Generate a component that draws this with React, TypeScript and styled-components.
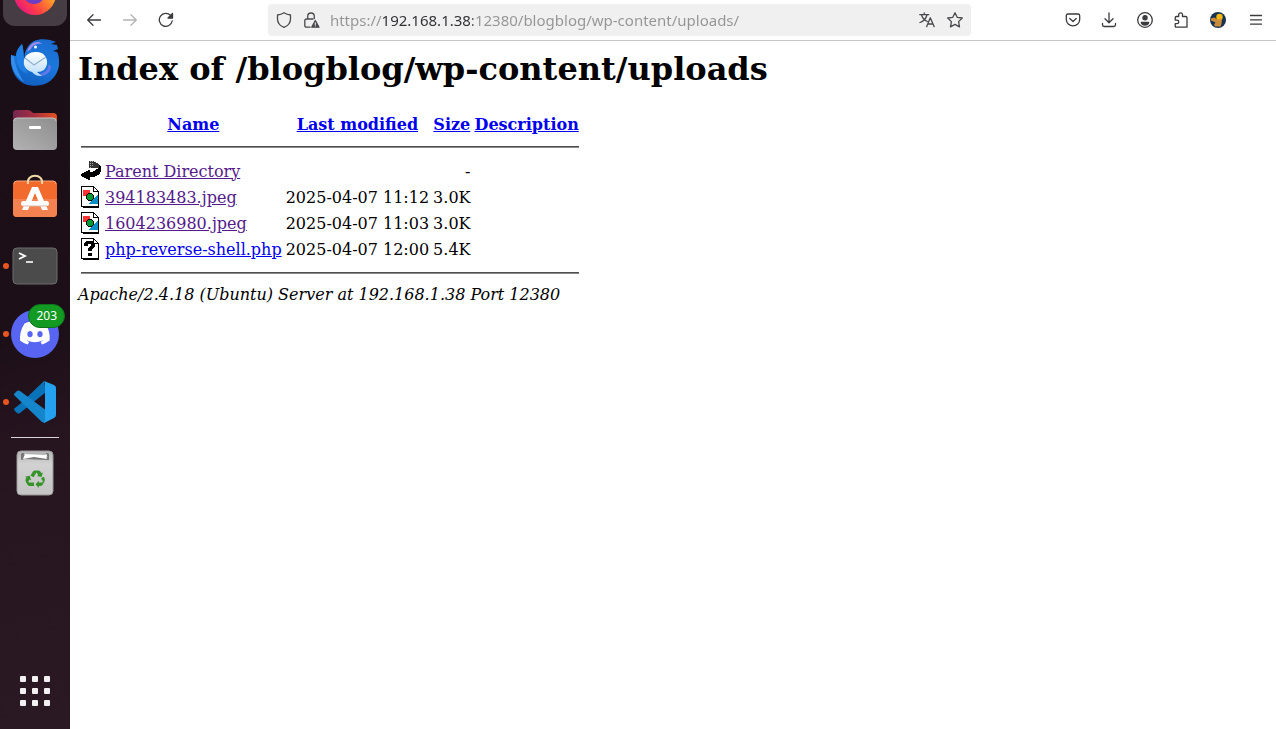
import React from "react";
import styled, { createGlobalStyle } from "styled-components";

const GlobalStyle = createGlobalStyle`
  *, *::before, *::after { box-sizing: border-box; }
  body { margin: 0; background: #fff; }
`;

const Desktop = styled.div`
  display: flex;
  min-height: 100vh;
`;

/* ---------- Dock ---------- */

const Dock = styled.nav`
  flex: none;
  width: 70px;
  height: 100vh;
  overflow: hidden;
  display: flex;
  flex-direction: column;
  align-items: center;
  gap: 4px;
  padding-bottom: 6px;
  background: linear-gradient(165deg, #1a0e17 0%, #1c0f18 45%, #26141f 60%, #2a1822 100%);
`;

const DockButton = styled.button<{ $active?: boolean; $running?: boolean }>`
  position: relative;
  flex: none;
  width: 64px;
  height: 64px;
  padding: 0;
  border: 0;
  border-radius: 12px;
  display: grid;
  place-items: center;
  background: ${(p) => (p.$active ? "#453d43" : "transparent")};

  &::before {
    content: "";
    display: ${(p) => (p.$running ? "block" : "none")};
    position: absolute;
    left: 0;
    top: 29px;
    width: 6px;
    height: 6px;
    border-radius: 50%;
    background: #e95420;
  }
  &:first-child { margin-top: -38px; }
  &:last-child { margin-top: auto; }
`;

const Badge = styled.span`
  position: absolute;
  top: 2px;
  right: 2px;
  height: 24px;
  padding: 0 7px;
  border-radius: 12px;
  background: #129a22;
  border: 1px solid #0c7519;
  color: #fff;
  font: 12px/22px "Noto Sans", sans-serif;
`;

const DockSeparator = styled.hr`
  flex: none;
  width: 48px;
  height: 1px;
  margin: -1px 0;
  border: 0;
  background: #d8d4d6;
`;

/* ---------- Browser ---------- */

const Browser = styled.div`
  flex: 1;
  min-width: 0;
`;

const Toolbar = styled.header`
  display: flex;
  align-items: center;
  height: 41px;
  padding: 0 1px 0 6px;
  border-bottom: 1px solid #c5c5c5;
  background: #fff;
`;

const ToolGroup = styled.div`
  display: flex;
  flex: none;
`;

const ToolButton = styled.button<{ $wide?: boolean }>`
  flex: none;
  width: ${(p) => (p.$wide ? 38 : 36)}px;
  height: 32px;
  padding: 0;
  border: 0;
  background: transparent;
  color: #3b3b3f;
  display: grid;
  place-items: center;
  &:disabled { color: #b4b4b4; }
`;

const AddressBar = styled.form`
  flex: 1;
  min-width: 0;
  height: 32px;
  margin: 0 7%;
  padding: 0 2px;
  border-radius: 4px;
  background: #f0f0f0;
  display: flex;
  align-items: center;
`;

const AddressButton = styled.button`
  flex: none;
  width: 28px;
  height: 28px;
  padding: 0;
  border: 0;
  background: transparent;
  color: #4a4a4e;
  display: grid;
  place-items: center;
`;

const AddressInput = styled.input`
  flex: 1;
  min-width: 0;
  height: 28px;
  margin-left: 4px;
  padding: 0;
  border: 0;
  outline: 0;
  font: 15px/28px "Noto Sans", sans-serif;
  color: transparent;
  caret-color: #333;
  background: linear-gradient(90deg, #949494 52px, #2e2e33 52px, #2e2e33 143px, #949494 143px);
  background-clip: text;
  -webkit-background-clip: text;
`;

/* ---------- Directory listing ---------- */

const Page = styled.main`
  padding: 9px 8px;
  font: 16px/19px "DejaVu Serif", serif;
  color: #000;
`;

const Title = styled.h1`
  margin: 0 0 21px;
  font-size: 32px;
  line-height: 38px;
  font-weight: bold;
`;

const Listing = styled.table`
  border-spacing: 2px;
  border-collapse: separate;

  th, td { padding: 1px; white-space: nowrap; }
  th { height: 24px; vertical-align: bottom; }
`;

const IconCell = styled.td`
  width: 22px;
  svg { display: block; }
`;

const NumberCell = styled.td`
  text-align: right;
`;

const Rule = styled.hr`
  height: 2px;
  margin: 8px 0;
  border: 0;
  border-top: 1px solid #4f4f4f;
  border-bottom: 1px solid #8a8a8a;
`;

const Link = styled.a<{ $visited?: boolean }>`
  color: ${(p) => (p.$visited ? "#551a8b" : "#0000ee")};
  text-decoration: underline;
`;

const Address = styled.address`
  font-style: italic;
`;

/* ---------- Dock icons ---------- */

const FirefoxIcon = () => (
  <svg width="48" height="48" viewBox="0 0 48 48">
    <defs>
      <linearGradient id="ff" x1="1" y1="0.3" x2="0.2" y2="1">
        <stop offset="0" stopColor="#ffd83d" />
        <stop offset="0.35" stopColor="#ff8a2a" />
        <stop offset="0.7" stopColor="#ff3b47" />
        <stop offset="1" stopColor="#e31587" />
      </linearGradient>
    </defs>
    <circle cx="24" cy="24" r="21" fill="url(#ff)" />
    <circle cx="23" cy="23" r="11" fill="#6a3fc4" />
  </svg>
);

const ThunderbirdIcon = () => (
  <svg width="50" height="50" viewBox="0 0 50 50">
    <defs>
      <linearGradient id="tb" x1="0.7" y1="0" x2="0.4" y2="1">
        <stop offset="0" stopColor="#1b6bd0" />
        <stop offset="0.5" stopColor="#1a78dc" />
        <stop offset="1" stopColor="#115fc0" />
      </linearGradient>
      <linearGradient id="tbm" x1="0" y1="0" x2="0" y2="1">
        <stop offset="0" stopColor="#fff" />
        <stop offset="1" stopColor="#b9dcfa" />
      </linearGradient>
    </defs>
    <path d="M12 7C7 12 6 15 6 19L1 18C0 31 4 39 10 44C17 50 29 50 37 46C46 41 50 31 49 23C49 19 48 17 47 15L43 14L48 12L47 8L41 7L46 5C40 2 30 1 24 4C20 6 18 9 16 13C14 17 14 21 15 26C13 18 14 13 12 7Z" fill="url(#tb)" />
    <path d="M12 7C7 12 6 17 7 24C8 31 12 35 17 36L15 26C13 18 14 13 12 7Z" fill="#1f7fe4" />
    <path d="M1 18C0 31 6 40 14 45C8 36 5 28 4 20Z" fill="#338fee" />
    <path d="M17 15C20 5 28 3 32 7C26 6 22 9 21 12Z" fill="#a78bea" />
    <path d="M26 38C35 36 39 32 38 28C43 27 41 34 38 36C35 39 30 40 26 38Z" fill="#5f77e8" />
    <circle cx="25.500" cy="10" r="1.500" fill="#fff" />
    <path d="M25 15C33 14 38 20 37 27C36 32 33 35 27 35C29 37 31 38 32 39C27 39 25 38 22 35C16 33 13 29 14 23C15 18 20 15 25 15Z" fill="url(#tbm)" />
    <path d="M15 21L24 28L36 20" fill="none" stroke="#8fb2d3" strokeWidth="1.200" />
  </svg>
);

const FilesIcon = () => (
  <svg width="46" height="42" viewBox="0 0 46 42">
    <defs>
      <linearGradient id="fb" x1="0" y1="0" x2="1" y2="0">
        <stop offset="0" stopColor="#762651" />
        <stop offset="0.5" stopColor="#a82f3e" />
        <stop offset="1" stopColor="#e65220" />
      </linearGradient>
      <linearGradient id="fg" x1="1" y1="0" x2="0" y2="1">
        <stop offset="0" stopColor="#8e8e8e" />
        <stop offset="1" stopColor="#b2b2b2" />
      </linearGradient>
    </defs>
    <path d="M1 12V4Q1 1 4 1H16Q18 1 20 3L21 4H41Q45 4 45 8V14H1Z" fill="url(#fb)" />
    <rect x="1" y="9" width="44" height="32" rx="4" fill="url(#fg)" />
    <path d="M2 12Q2 9 5 9H41Q44 9 44 12" fill="none" stroke="#c5c5c5" />
    <rect x="17" y="17" width="12" height="3" rx="1" fill="#fff" />
  </svg>
);

const SoftwareIcon = () => (
  <svg width="46" height="50" viewBox="0 0 46 50">
    <rect x="1" y="8" width="44" height="36" rx="4" fill="#f26a2c" />
    <path d="M1 26H45V40Q45 44 41 44H5Q1 44 1 40Z" fill="#f48150" />
    <path d="M2 11Q2 8 5 8H41Q44 8 44 11" fill="none" stroke="#f9a57e" />
    <path d="M16 11C14 0 32 0 30 11" fill="none" stroke="#ecd9a4" strokeWidth="2" />
    <path d="M20 14H26L36 37H30L23 20L16 37H10Z" fill="#fff" />
    <rect x="9" y="28" width="28" height="5" rx="2.500" fill="#fff" />
    <path d="M11 33H35" stroke="#d9b7a8" strokeWidth="1" />
  </svg>
);

const TerminalIcon = () => (
  <svg width="46" height="38" viewBox="0 0 46 38">
    <rect x="1" y="1" width="44" height="36" rx="4" fill="#4b4b4b" stroke="#6c6c6c" />
    <path d="M7 6L13 9L7 12" fill="none" stroke="#fff" strokeWidth="1.800" />
    <path d="M14 15H21" stroke="#fff" strokeWidth="1.600" />
  </svg>
);

const DiscordIcon = () => (
  <svg width="48" height="48" viewBox="0 0 48 48">
    <circle cx="24" cy="24" r="24" fill="#5865f2" />
    <path
      transform="translate(9 8) scale(1.250)"
      fill="#fff"
      d="M20.317 4.370a19.800 19.800 0 0 0-4.885-1.515.074.074 0 0 0-.079.037c-.210.375-.444.864-.608 1.250a18.270 18.270 0 0 0-5.487 0 12.600 12.600 0 0 0-.617-1.250.077.077 0 0 0-.079-.037A19.700 19.700 0 0 0 3.677 4.370C.533 9.046-.320 13.580.099 18.058a.082.082 0 0 0 .031.057 19.900 19.900 0 0 0 5.993 3.030 14 14 0 0 0 1.226-1.994 13 13 0 0 1-1.872-.892l.372-.292a14.200 14.200 0 0 0 12.102 0l.373.293a12.300 12.300 0 0 1-1.873.891 16 16 0 0 0 1.225 1.993 19.800 19.800 0 0 0 6.033-3.087c.5-5.177-.838-9.674-3.392-13.687zM8.020 15.330c-1.183 0-2.157-1.085-2.157-2.419s.956-2.419 2.157-2.419c1.210 0 2.176 1.096 2.157 2.420 0 1.333-.956 2.418-2.157 2.418zm7.975 0c-1.183 0-2.157-1.085-2.157-2.419s.955-2.419 2.157-2.419c1.210 0 2.176 1.096 2.157 2.420 0 1.333-.946 2.418-2.157 2.418z"
    />
  </svg>
);

const CodeIcon = () => (
  <svg width="42" height="42" viewBox="0 0 42 42">
    <path d="M30 0L6 23L1 27Q-1 28 1 30L3 32Q4 33 6 32L32 11Z" fill="#0a72b8" />
    <path d="M6 10Q4 9 3 10L1 12Q-1 13 1 15L28 41L31 42L33 30Z" fill="#1585cc" />
    <path d="M30 0L40 4Q42 5 42 7V34Q42 36 40 37L30 42Q31 40 31 38V4Q31 2 30 0Z" fill="#24a2ef" />
  </svg>
);

const TrashIcon = () => (
  <svg width="38" height="46" viewBox="0 0 38 46">
    <defs>
      <linearGradient id="tr" x1="0" y1="0" x2="0" y2="1">
        <stop offset="0" stopColor="#b5b5b5" />
        <stop offset="0.3" stopColor="#d2d2d2" />
        <stop offset="1" stopColor="#c4c4c4" />
      </linearGradient>
    </defs>
    <rect x="1" y="1" width="36" height="44" rx="4" fill="url(#tr)" stroke="#979797" />
    <path d="M5 4Q5 3 7 3H31Q33 3 33 4V10H30L9 9L5 10Z" fill="#777" />
    <path d="M7 9L9 4L30 5L31 9L18 7Z" fill="#fff" />
    <path d="M8 4H30L31 7" fill="none" stroke="#efefef" />
    <g fill="#36932a">
      <path d="M14.500 25.500L17 21.500Q17.500 20.500 19 20.500H22.500Q24 20.500 24.800 22L25.500 23.200L27 22.300L25.500 27L20.800 26L22.300 25.100L20.500 22.500L17.500 27.300Z" />
      <path d="M25 28.200L27.800 26.800L28.500 28.200Q29.300 30 28.300 31.700L26.600 34.700Q25.700 36 24 36H22.800V38L19.500 34.300L22.800 30.700V32.500H26.200L27 31.500Z" />
      <path d="M18 32.500V36H14Q12.300 36 11.500 34.700L9.800 31.700Q9 30.300 9.800 28.800L10.500 27.600L9 26.700L13.700 25.700L15.200 30.400L13.600 29.500L12.400 31.500L13 32.500Z" />
    </g>
  </svg>
);

const AppsGridIcon = () => (
  <svg width="30" height="30" viewBox="0 0 30 30" fill="#f2f0f1">
    {[0, 12, 24].map((y) => [0, 12, 24].map((x) => <rect key={`${x}-${y}`} x={x} y={y} width="6" height="6" rx="1" />))}
  </svg>
);

/* ---------- Toolbar icons ---------- */

const Glyph = ({ children }: { children: React.ReactNode }) => (
  <svg width="16" height="16" viewBox="0 0 16 16" fill="none" stroke="currentColor" strokeWidth="1.300" strokeLinecap="round" strokeLinejoin="round">
    {children}
  </svg>
);

const ShieldGlyph = () => (
  <Glyph><path d="M8 .7C10 2 12 2.700 14.500 3V7C14.500 11 12 13.800 8 15.400C4 13.800 1.500 11 1.500 7V3C4 2.700 6 2 8 .7Z" /></Glyph>
);
const LockGlyph = () => (
  <Glyph>
    <path d="M3.700 7V4.500C3.700-.2 10.300-.2 10.300 4.500V6.500M6 15.200H2.500Q.8 15.200 .8 13.500V8.700Q.8 7 2.500 7H9" />
    <path d="M11.300 8.500L7.700 15.200H15Z" fill="currentColor" />
    <path d="M11.300 10.700V12.500M11.300 13.900V14" stroke="#f0f0f0" strokeWidth="1.100" />
  </Glyph>
);
const TranslateGlyph = () => (
  <Glyph>
    <path d="M.8 2.700H9.700M5.200.8V2.700M2.500 3C3.500 6 6 8.500 8.300 9.500M8 3C7 6.500 4 9.500 1 10.500" />
    <path d="M7.600 14.700L11.300 5.800L15.200 14.700M9 12H13.800" />
  </Glyph>
);
const StarGlyph = () => (
  <Glyph><path d="M8 .8L10.200 5.300L15.300 6L11.600 9.600L12.500 14.900L8 12.400L3.500 14.900L4.400 9.600L.7 6L5.800 5.300Z" /></Glyph>
);
const BackGlyph = () => <Glyph><path d="M14.500 8H1.700M7 2.700L1.700 8L7 13.300" /></Glyph>;
const ForwardGlyph = () => <Glyph><path d="M1.500 8H14.300M9 2.700L14.300 8L9 13.300" /></Glyph>;
const ReloadGlyph = () => (
  <Glyph>
    <path d="M14.200 9A6.500 6.500 0 1 1 12.600 3.400" />
    <path d="M14.500 1.500V6H10Z" fill="currentColor" />
  </Glyph>
);
const PocketGlyph = () => (
  <Glyph><path d="M3 2H13Q14.700 2 14.700 3.700V7.500A6.700 6.300 0 0 1 1.300 7.500V3.700Q1.300 2 3 2ZM4.800 6.500L8 9.500L11.200 6.500" /></Glyph>
);
const DownloadGlyph = () => (
  <Glyph><path d="M8 .8V10.500M4 6.700L8 10.700L12 6.700M1.500 11.500V12.800Q1.500 14.500 3.200 14.500H12.800Q14.500 14.500 14.500 12.800V11.500" /></Glyph>
);
const AccountGlyph = () => (
  <Glyph>
    <circle cx="8" cy="8" r="7.300" />
    <circle cx="8" cy="5.700" r="2.100" fill="currentColor" />
    <path d="M4.300 10.300H11.700Q11 13 8 13Q5 13 4.300 10.300Z" fill="currentColor" />
  </Glyph>
);
const ExtensionGlyph = () => (
  <Glyph><path d="M5.700 4.500V2.700A1.900 1.900 0 0 1 9.500 2.700V4.500H12.800Q14 4.500 14 5.700V15.200H3.500Q2.200 15.200 2.200 14V11.700H4A1.800 1.800 0 0 0 4 8.100H2.200V5.700Q2.200 4.500 3.400 4.500Z" /></Glyph>
);
const MenuGlyph = () => <Glyph><path d="M2.500 3.500H13.500M2.500 7.800H13.500M2.500 12.200H13.500" /></Glyph>;
const ProfileGlyph = () => (
  <svg width="16" height="16" viewBox="0 0 16 16">
    <circle cx="8" cy="8" r="8" fill="#17324f" />
    <circle cx="9.500" cy="5" r="3.200" fill="#f5bb0e" />
    <path d="M.5 6.500L4.500 5.500L7.500 7.500L12 6.500L11.500 12L10.500 14.500L5 14.500L4 12.500L5.500 10.500L1 8.500Z" fill="#c98a3c" />
    <path d="M7 7.500L9.500 8.500L12 7" fill="none" stroke="#e0a52a" />
  </svg>
);

/* ---------- Listing icons ---------- */

const ParentIcon = () => (
  <svg width="20" height="22" viewBox="0 0 20 22" shapeRendering="crispEdges">
    <path d="M8 1H13V2H15V3H17V4H18V8H8Z" fill="#333" />
    <path d="M9 1V8M11 1V7" stroke="#aaa" strokeDasharray="1 1" />
    <path d="M18 5H19V6H20V12H19V14H18V15H16V16H14V17H9V20H7V19H5V18H3V17H1V16H0V14H1V13H3V12H5V11H7V10H9V12H12V11H14V10H15V9H17V8H18Z" fill="#000" />
  </svg>
);

const PageOutline = () => (
  <>
    <path d="M1 1H13V6H18V21H1Z" fill="#fff" />
    <path d="M0 0H13V1H1V20H17V6H12V1H14V2H15V3H16V4H17V5H18V22H2V21H0Z" fill="#000" />
    <path d="M13 2H14V3H15V4H16V5H13Z" fill="#fff" />
  </>
);

const ImageIcon = () => (
  <svg width="20" height="22" viewBox="0 0 20 22" shapeRendering="crispEdges">
    <PageOutline />
    <rect x="2" y="4" width="7" height="6" fill="#f33" />
    <path d="M16 9H17V18H8V17H9V16H10V15H11V14H12V13H13V12H14V11H15V10H16Z" fill="#0a90c8" />
    <path d="M7 7H11V8H12V9H13V13H12V14H11V15H7V14H6V13H5V9H6V8H7Z" fill="#000" />
    <path d="M7 8H11V9H12V13H11V14H7V13H6V9H7Z" fill="#093" />
  </svg>
);

const UnknownIcon = () => (
  <svg width="20" height="22" viewBox="0 0 20 22" shapeRendering="crispEdges">
    <PageOutline />
    <path d="M5 3H12V4H13V5H14V9H13V10H12V11H11V13H7V10H8V9H9V8H10V6H7V8H3V5H4V4H5ZM7 15H11V18H7Z" fill="#000" />
  </svg>
);

type Entry = { icon: React.ReactNode; name: string; modified: string; size: string; visited: boolean };

const entries: Entry[] = [
  { icon: <ParentIcon />, name: "Parent Directory", modified: "", size: "-", visited: true },
  { icon: <ImageIcon />, name: "394183483.jpeg", modified: "2025-04-07 11:12", size: "3.0K", visited: true },
  { icon: <ImageIcon />, name: "1604236980.jpeg", modified: "2025-04-07 11:03", size: "3.0K", visited: true },
  { icon: <UnknownIcon />, name: "php-reverse-shell.php", modified: "2025-04-07 12:00", size: "5.4K", visited: false },
];

const columns = ["Name", "Last modified", "Size", "Description"];

export default function App() {
  return (
    <Desktop>
      <GlobalStyle />
      <Dock aria-label="Dock">
        <DockButton $active aria-label="Firefox"><FirefoxIcon /></DockButton>
        <DockButton aria-label="Thunderbird"><ThunderbirdIcon /></DockButton>
        <DockButton aria-label="Files"><FilesIcon /></DockButton>
        <DockButton aria-label="Software"><SoftwareIcon /></DockButton>
        <DockButton $running aria-label="Terminal"><TerminalIcon /></DockButton>
        <DockButton $running aria-label="Discord">
          <DiscordIcon />
          <Badge>203</Badge>
        </DockButton>
        <DockButton $running aria-label="Visual Studio Code"><CodeIcon /></DockButton>
        <DockSeparator />
        <DockButton aria-label="Trash"><TrashIcon /></DockButton>
        <DockButton aria-label="Show applications"><AppsGridIcon /></DockButton>
      </Dock>
      <Browser>
        <Toolbar>
          <ToolGroup>
            <ToolButton aria-label="Back"><BackGlyph /></ToolButton>
            <ToolButton aria-label="Forward" disabled><ForwardGlyph /></ToolButton>
            <ToolButton aria-label="Reload"><ReloadGlyph /></ToolButton>
          </ToolGroup>
          <AddressBar onSubmit={(e) => e.preventDefault()}>
            <AddressButton type="button" aria-label="Tracking protection"><ShieldGlyph /></AddressButton>
            <AddressButton type="button" aria-label="Connection not secure"><LockGlyph /></AddressButton>
            <AddressInput aria-label="Address" spellCheck={false} defaultValue="https://192.168.1.38:12380/blogblog/wp-content/uploads/" />
            <AddressButton type="button" aria-label="Translate page"><TranslateGlyph /></AddressButton>
            <AddressButton type="button" aria-label="Bookmark page"><StarGlyph /></AddressButton>
          </AddressBar>
          <ToolGroup>
            <ToolButton aria-label="Save to Pocket"><PocketGlyph /></ToolButton>
            <ToolButton aria-label="Downloads"><DownloadGlyph /></ToolButton>
            <ToolButton aria-label="Account"><AccountGlyph /></ToolButton>
            <ToolButton aria-label="Extensions"><ExtensionGlyph /></ToolButton>
            <ToolButton $wide aria-label="Profile"><ProfileGlyph /></ToolButton>
            <ToolButton $wide aria-label="Menu"><MenuGlyph /></ToolButton>
          </ToolGroup>
        </Toolbar>
        <Page>
          <Title>Index of /blogblog/wp-content/uploads</Title>
          <Listing>
            <thead>
              <tr>
                <IconCell />
                {columns.map((c) => (
                  <th key={c} scope="col"><Link href="#">{c}</Link></th>
                ))}
              </tr>
              <tr><td colSpan={5}><Rule /></td></tr>
            </thead>
            <tbody>
              {entries.map((e) => (
                <tr key={e.name}>
                  <IconCell>{e.icon}</IconCell>
                  <td><Link href="#" $visited={e.visited}>{e.name}</Link></td>
                  <NumberCell>{e.modified}</NumberCell>
                  <NumberCell>{e.size}</NumberCell>
                  <td />
                </tr>
              ))}
            </tbody>
            <tfoot>
              <tr><td colSpan={5}><Rule /></td></tr>
            </tfoot>
          </Listing>
          <Address>Apache/2.4.18 (Ubuntu) Server at 192.168.1.38 Port 12380</Address>
        </Page>
      </Browser>
    </Desktop>
  );
}
